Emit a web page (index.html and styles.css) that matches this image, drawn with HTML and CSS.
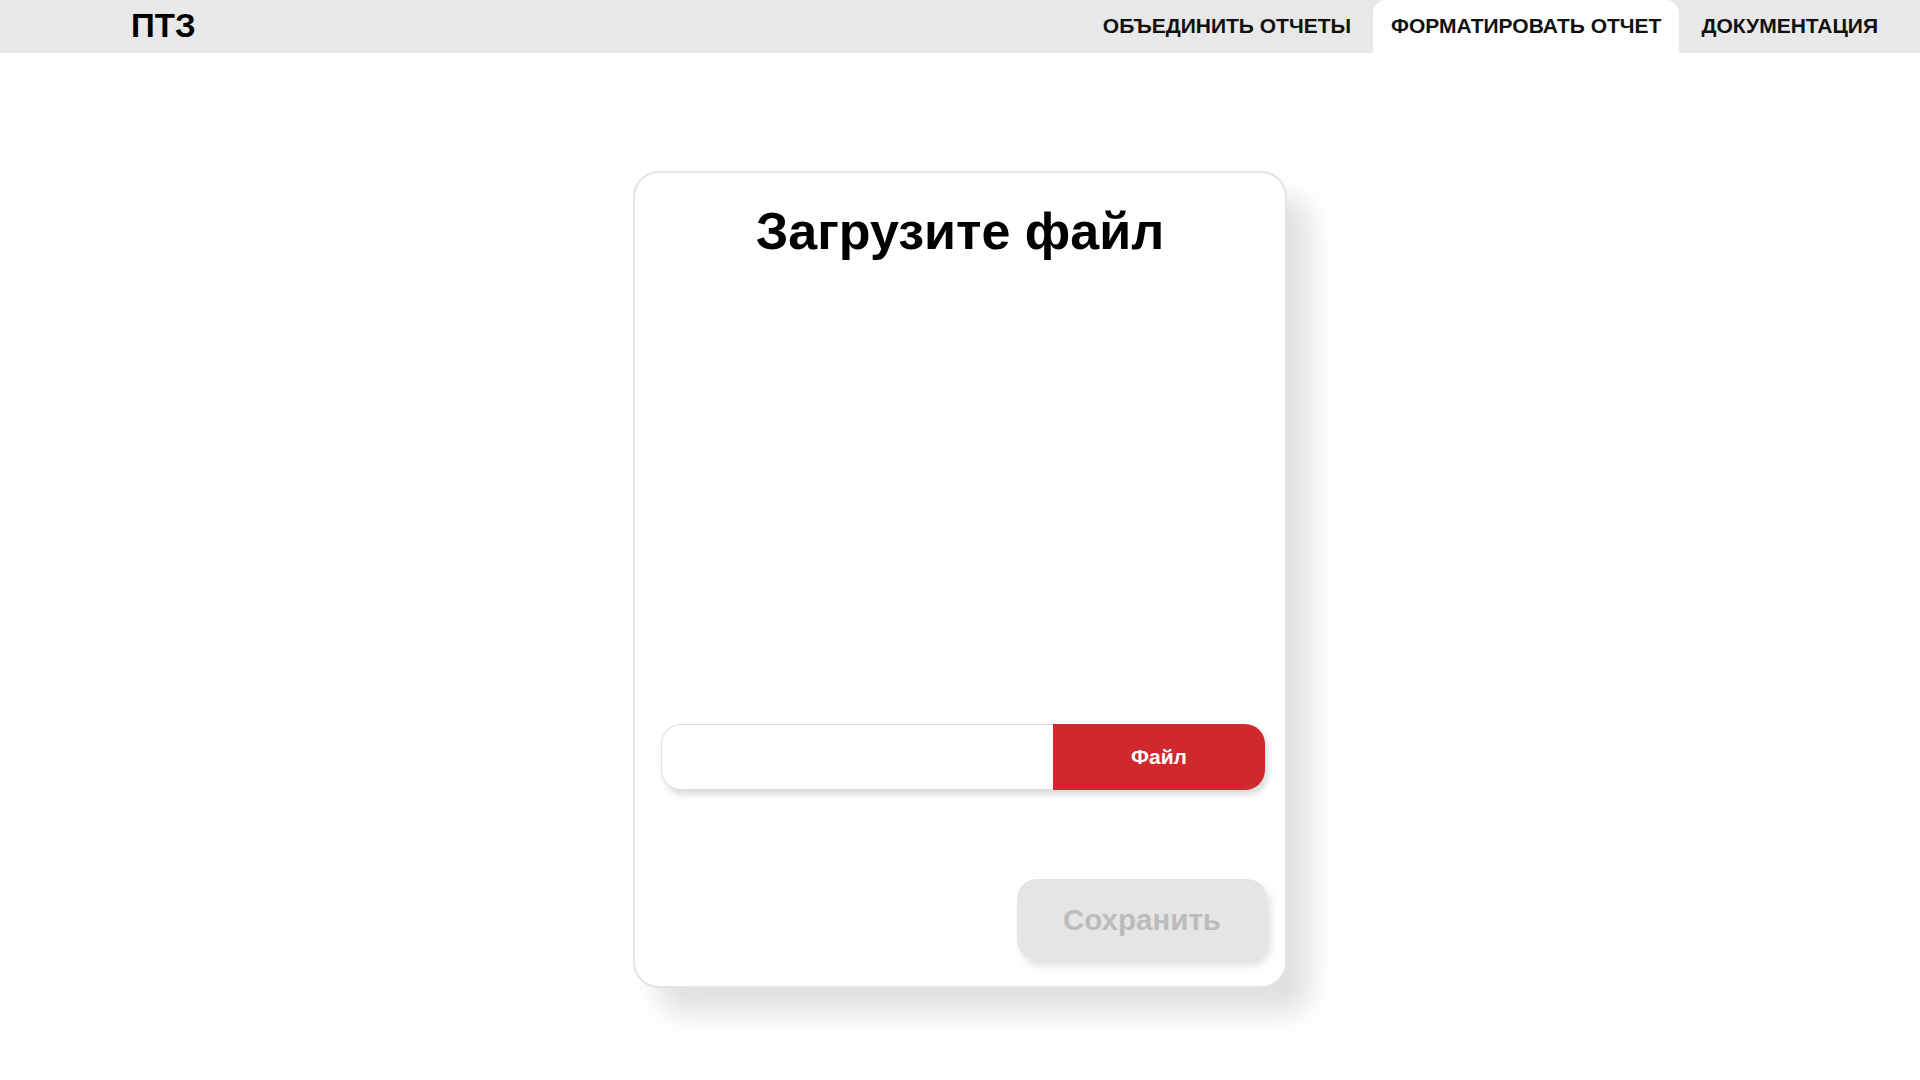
FILE: index.html
```html
<!DOCTYPE html>
<html lang="ru">
<head>
<meta charset="utf-8">
<title>ПТЗ</title>
<link rel="stylesheet" href="styles.css">
</head>
<body>
<header class="topbar">
  <div class="logo">ПТЗ</div>
  <nav class="nav">
    <a class="nav-item">ОБЪЕДИНИТЬ ОТЧЕТЫ</a>
    <a class="nav-item active">ФОРМАТИРОВАТЬ ОТЧЕТ</a>
    <a class="nav-item">ДОКУМЕНТАЦИЯ</a>
  </nav>
</header>
<main class="main">
  <section class="card">
    <h1 class="title">Загрузите файл</h1>
    <div class="file-row">
      <div class="file-name"></div>
      <button class="file-btn">Файл</button>
    </div>
    <div class="actions">
      <button class="save-btn">Сохранить</button>
    </div>
  </section>
</main>
</body>
</html>
```
FILE: styles.css
```css
* { box-sizing: border-box; }
html, body { margin: 0; padding: 0; background: #ffffff; }
body { font-family: "Liberation Sans", Arial, sans-serif; color: #000; min-height: 1080px; }

.topbar {
  height: 53px;
  background: #e8e8e8;
  display: flex;
  align-items: stretch;
  justify-content: space-between;
  padding: 0 24px 0 131px;
}
.logo {
  font-size: 33px;
  font-weight: 700;
  line-height: 51px;
}
.nav { display: flex; align-items: stretch; gap: 4px; }
.nav-item {
  display: flex;
  align-items: center;
  padding: 0 18px 2px;
  font-size: 21px;
  font-weight: 700;
  color: #111;
  text-decoration: none;
  border-radius: 14px 14px 0 0;
}
.nav-item.active { background: #ffffff; }

.main {
  display: flex;
  justify-content: center;
  padding: 118px 0 90px;
}
.card {
  width: 654px;
  height: 817px;
  border: 2px solid #e4e4e4;
  border-radius: 26px;
  background: #fff;
  box-shadow: 24px 26px 28px rgba(0, 0, 0, 0.12);
  display: flex;
  flex-direction: column;
  padding: 29px 20px 26px 26px;
}
.title {
  margin: 0;
  text-align: center;
  font-size: 52px;
  font-weight: 700;
  line-height: 58px;
  padding-right: 6px;
}
.file-row {
  margin-top: auto;
  display: flex;
  height: 66px;
  border-radius: 20px;
  box-shadow: 3px 5px 6px rgba(0, 0, 0, 0.14);
}
.file-name {
  flex: 1;
  border: 1px solid #dedede;
  border-right: none;
  border-radius: 20px 0 0 20px;
  background: #fff;
}
.file-btn {
  width: 212px;
  border: none;
  background: #cf292e;
  color: #fff;
  font-family: "Liberation Sans", Arial, sans-serif;
  font-size: 21px;
  font-weight: 700;
  border-radius: 0 20px 20px 0;
}
.actions {
  margin-top: 89px;
  display: flex;
  justify-content: flex-end;
}
.save-btn {
  width: 250px;
  height: 81px;
  border: none;
  border-radius: 20px;
  background: #e5e5e5;
  color: #bcbcbc;
  font-family: "Liberation Sans", Arial, sans-serif;
  font-size: 29.5px;
  font-weight: 700;
  box-shadow: 4px 6px 8px rgba(0, 0, 0, 0.12);
  margin-right: -2px;
}
```
